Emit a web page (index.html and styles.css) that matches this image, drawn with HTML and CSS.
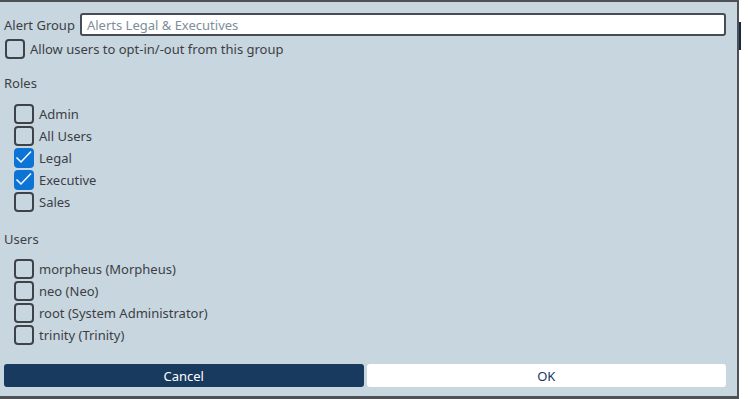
FILE: index.html
```html
<!DOCTYPE html>
<html lang="en">
<head>
    <meta charset="UTF-8">
    <title>Alert Group</title>
    <link rel="stylesheet" href="styles.css">
</head>
<body>

<div class="dialog">
    <div class="field-row">
        <label class="field-label" for="groupName">Alert Group</label>
        <input id="groupName" class="field-input" type="text" placeholder="Alerts Legal &amp; Executives">
    </div>

    <label class="check-row opt-row">
        <span class="box"></span> Allow users to opt-in/-out from this group
    </label>

    <div class="section-title">Roles</div>
    <div class="check-list">
        <label class="check-row"><span class="box"></span> Admin</label>
        <label class="check-row"><span class="box"></span> All Users</label>
        <label class="check-row"><span class="box checked"><svg viewBox="0 0 20 20"><path d="M2.5 9.5 L7 14 L17 3.5" /></svg></span> Legal</label>
        <label class="check-row"><span class="box checked"><svg viewBox="0 0 20 20"><path d="M2.5 9.5 L7 14 L17 3.5" /></svg></span> Executive</label>
        <label class="check-row"><span class="box"></span> Sales</label>
    </div>

    <div class="section-title users-title">Users</div>
    <div class="check-list users-list">
        <label class="check-row"><span class="box"></span> morpheus (Morpheus)</label>
        <label class="check-row"><span class="box"></span> neo (Neo)</label>
        <label class="check-row"><span class="box"></span> root (System Administrator)</label>
        <label class="check-row"><span class="box"></span> trinity (Trinity)</label>
    </div>

    <div class="actions">
        <button class="btn btn-cancel">Cancel</button>
        <button class="btn btn-ok">OK</button>
    </div>
</div>

<div class="edge-mark"></div>

</body>
</html>
```

FILE: styles.css
```css
:root {
    --bg: #c8d6e0;
    --text: #3b3f44;
    --border: #3d4349;
    --navy: #173a5e;
    --blue: #0b74d6;
}

* { box-sizing: border-box; }

body {
    margin: 0;
    background: #ffffff;
    font-family: "Noto Sans", "Open Sans", sans-serif;
    font-size: 13px;
    color: var(--text);
    width: 748px;
    height: 399px;
    overflow: hidden;
    position: relative;
}

.dialog {
    width: 739px;
    height: 399px;
    background: var(--bg);
    border-top: 2px solid #4e5256;
    border-right: 2px solid #4e5256;
    border-bottom: 3px solid #4e5256;
    padding: 11px 11px 0 4px;
    display: flex;
    flex-direction: column;
}

.field-row {
    display: flex;
    align-items: center;
    gap: 5px;
    height: 23px;
}

.field-label { white-space: nowrap; }

.field-input {
    flex: 1;
    height: 23px;
    border: 2px solid #474d54;
    border-radius: 3px;
    background: #fff;
    font: inherit;
    color: var(--text);
    padding: 0 5px;
    outline: none;
}

.field-input::placeholder { color: #7e8e9a; }

.check-row {
    display: flex;
    align-items: center;
    gap: 5px;
    height: 22px;
    white-space: nowrap;
}

.opt-row { margin: 2px 0 0 1px; }

.box {
    width: 20px;
    height: 20px;
    border: 2px solid var(--border);
    border-radius: 4px;
    flex: none;
    display: flex;
}

.box.checked {
    background: var(--blue);
    border-color: var(--blue);
}

.box svg {
    width: 20px;
    height: 20px;
    margin: -2px;
    fill: none;
    stroke: #fff;
    stroke-width: 1.5;
}

.section-title {
    margin-top: 13px;
    height: 20px;
    line-height: 20px;
}

.check-list {
    display: flex;
    flex-direction: column;
    padding-left: 10px;
    margin-top: 10px;
}

.users-title { margin-top: 16px; }
.users-list { margin-top: 9px; }

.actions {
    margin-top: auto;
    margin-bottom: 9px;
    display: flex;
    gap: 3px;
}

.btn {
    flex: 1;
    height: 23px;
    border: none;
    border-radius: 3px;
    font: inherit;
    cursor: pointer;
}

.btn-cancel { background: var(--navy); color: #fff; }
.btn-ok { background: #fff; color: var(--navy); }

/* sliver of the window behind the dialog */
.edge-mark {
    position: absolute;
    left: 739px;
    top: 22px;
    width: 2px;
    height: 28px;
    background: #142a40;
}
```
